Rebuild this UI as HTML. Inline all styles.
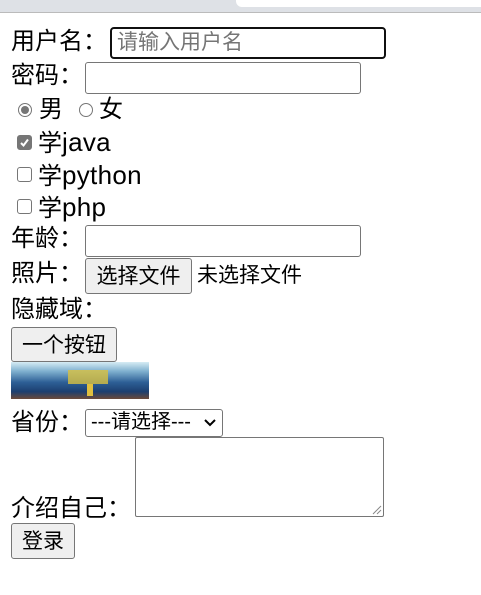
<!DOCTYPE html>
<html><head><meta charset="utf-8"><style>
body{margin:0;width:481px;height:595px;background:#fff;position:relative;overflow:hidden;font-family:"Liberation Sans","Noto Sans CJK SC",sans-serif;font-size:24px;color:#000}
.a{position:absolute;white-space:nowrap;line-height:32px}
.box{position:absolute;box-sizing:border-box;border:1px solid #767676;border-radius:3px;background:#fff}
.btn{position:absolute;box-sizing:border-box;border:1px solid #767676;border-radius:3px;background:#efefef;font-size:21px;text-align:center;line-height:36px}
.rad{position:absolute;width:14px;height:14px;border:1px solid #767676;border-radius:50%;box-sizing:border-box;background:#fff}
.chk{position:absolute;width:15px;height:15px;border:1px solid #767676;border-radius:3px;box-sizing:border-box;background:#fff}
.lt{font-size:26px;letter-spacing:0.3px}
</style></head><body>
<div style="position:absolute;left:0;top:0;width:481px;height:12px;background:#dee1e6;border-bottom:1px solid #bbb"></div>
<div style="position:absolute;left:236px;top:0;width:245px;height:7px;background:#fff;border-radius:0 0 0 6px"></div>

<div class="a" style="left:11px;top:26px">用户名：</div>
<div class="box" style="left:110px;top:27px;width:276px;height:32px;border:2px solid #101010;border-radius:4px;color:#757575;font-size:21px;line-height:27px;padding-left:5px">请输入用户名</div>
<div class="a" style="left:11px;top:60px">密码：</div>
<div class="box" style="left:85px;top:62px;width:276px;height:32px"></div>

<div class="rad" style="left:18px;top:103px"><div style="position:absolute;left:2px;top:2px;width:8px;height:8px;border-radius:50%;background:#767676"></div></div>
<div class="a" style="left:39px;top:94px">男</div>
<div class="rad" style="left:79px;top:103px"></div>
<div class="a" style="left:99px;top:94px">女</div>

<div class="chk" style="left:17px;top:135px;background:#767676"><svg width="13" height="13" style="position:absolute;left:0;top:0"><path d="M3 7 L5.5 9.5 L10 3.5" stroke="#fff" stroke-width="2" fill="none"/></svg></div>
<div class="a" style="left:38px;top:126px">学<span class="lt">java</span></div>
<div class="chk" style="left:17px;top:167px"></div>
<div class="a" style="left:38px;top:159px">学<span class="lt">python</span></div>
<div class="chk" style="left:17px;top:199px"></div>
<div class="a" style="left:38px;top:191px">学<span class="lt">php</span></div>

<div class="a" style="left:11px;top:223px">年龄：</div>
<div class="box" style="left:85px;top:225px;width:276px;height:32px"></div>
<div class="a" style="left:11px;top:258px">照片：</div>
<div class="btn" style="left:85px;top:258px;width:107px;height:36px">选择文件</div>
<div class="a" style="left:197px;top:260px;font-size:21px">未选择文件</div>
<div class="a" style="left:11px;top:294px">隐藏域：</div>
<div class="btn" style="left:11px;top:327px;width:106px;height:35px">一个按钮</div>
<div style="position:absolute;left:11px;top:362px;width:138px;height:37px;background:linear-gradient(180deg,#d6ecf4 0%,#7fb0cf 25%,#2d5f96 55%,#1c3f70 80%,#6b4a3a 100%)"><div style="position:absolute;left:57px;top:8px;width:40px;height:14px;background:#d8c040;opacity:.8"></div><div style="position:absolute;left:76px;top:22px;width:6px;height:12px;background:#e0c040"></div></div>

<div class="a" style="left:11px;top:407px">省份：</div>
<div class="box" style="left:85px;top:409px;width:138px;height:28px;font-size:20px;line-height:25px;padding-left:5px">---请选择---<svg width="12" height="8" style="position:absolute;right:6px;top:9px"><path d="M1 1 L6 6 L11 1" stroke="#000" stroke-width="2" fill="none"/></svg></div>
<div class="box" style="left:135px;top:437px;width:249px;height:80px;border-radius:2px"><svg width="10" height="10" style="position:absolute;right:1px;bottom:1px"><path d="M9 1 L1 9 M9 5 L5 9" stroke="#888" stroke-width="1"/></svg></div>
<div class="a" style="left:11px;top:493px">介绍自己：</div>
<div class="btn" style="left:11px;top:523px;width:64px;height:36px">登录</div>
</body></html>
